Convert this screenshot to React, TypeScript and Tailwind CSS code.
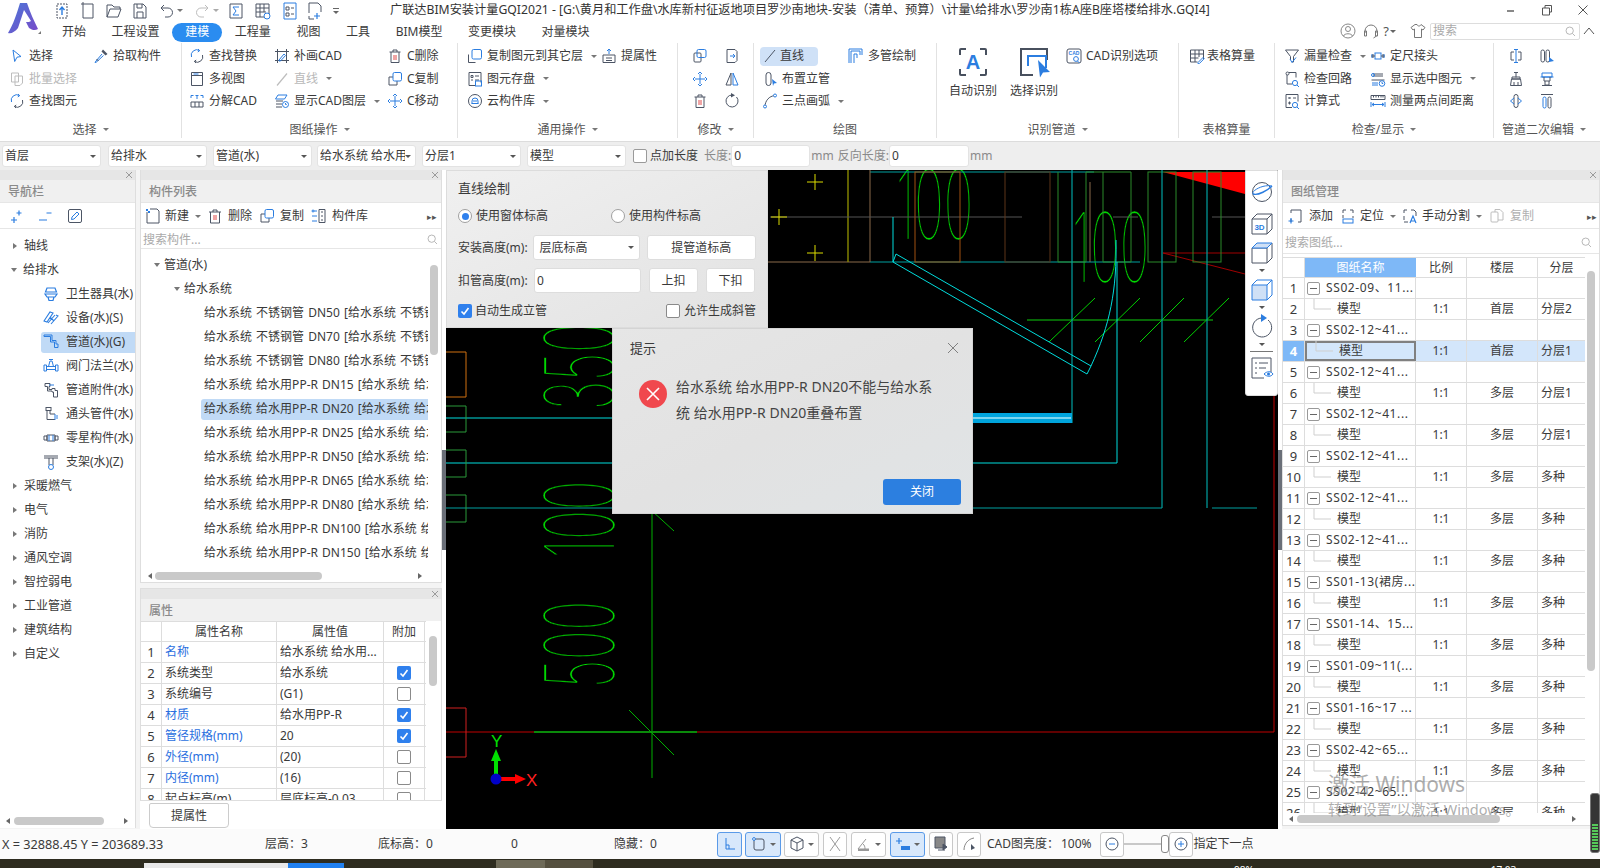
import React from "react";

const g = "#4c5565";
const b = "#2b7de0";
const dim = "#bdbdbd";
const P = (d: string, c: string = g, w: number = 1) => <path d={d} stroke={c} strokeWidth={w} fill="none" />;

const ICONS: Record<string, React.ReactNode> = {
  cursor: P("M4 2l8 6.5-4 .7-2.3 4.3z", b),
  pick: <><path d="M10 1.5l4.5 4.5-2 1.5-4-4z" fill={g} />{P("M9 6l-6 7-1 1.5 1.5-.5 7-6.5", b)}{P("M3.5 11l2 2", g)}</>,
  batch: <>{P("M2.5 2h7v9h-7z", dim)}{P("M6 5h7.5v7l-2.5 2.5H6z", dim)}</>,
  find: <>{P("M2.5 9a5.5 5.5 0 0 1 8-6.5", b)}{P("M9 1l1.7 1.6L8.8 4", b)}{P("M13.5 7a5.5 5.5 0 0 1-8 6.5")}{P("M7 15l-1.7-1.6L7.2 12")}</>,
  multi: <>{P("M2.5 1.5h11v13h-11z")}{P("M2.5 4.5h11")}{P("M4.5 3h5", b)}</>,
  split: <>{P("M2 9h12v5H2zM6 9v5M10 9v5")}{P("M2 5V2.5h2.5M11.5 2.5H14V5M6.5 2.5h3", b)}{P("M8 3v3", b)}</>,
  fill: <>{P("M1 3.5h14M3.5 1v14M1 12.5h14M12.5 1v14")}{P("M5 12l5-6 1.5 1.5-5 5.5H5z", b)}</>,
  lineDim: P("M3 14.5L13 2.5", dim, 1.2),
  layers: <>{P("M4 2h9l-2.5 4H1.5z", b)}{P("M2 8h7M2 11h6M2 14h6")}<circle cx="11.5" cy="11.5" r="3" stroke={b} fill="none" />{P("M11.5 10v1.5h1.2", b)}</>,
  trash: <>{P("M2.5 4h11M6 4V2h4v2M4 4v10.5h8V4")}{P("M7 7v5M9 7v5", "#e04a4a")}</>,
  copy: <>{P("M2 6h4M2 6v8h8v-4")}<rect x="6" y="1.5" width="8.5" height="8.5" rx="1.5" stroke={b} fill="none" /></>,
  copyF: <>{P("M1.5 6.5v8h7")}<rect x="5" y="1.5" width="9.5" height="9.5" rx="1.5" stroke={b} fill="none" /></>,
  move: <>{P("M8 3v10M3 8h10", b)}{P("M6 3l2-2 2 2M6 13l2 2 2-2M3 6L1 8l2 2M13 6l2 2-2 2", b)}</>,
  raise: <>{P("M8 1v5M6 3l2-2 2 2", b)}{P("M2 7h12v7.5H2zM5 10h6M5 12.5h6")}</>,
  store: <>{P("M2 1.5h12v10M2 1.5v13h6")}{P("M4 4.5h2v2H4zM8 5h4M4 9h2M8 9h4")}<rect x="8.5" y="10" width="6" height="5" stroke={b} fill="none" /></>,
  cloud: <><circle cx="8" cy="8" r="6.5" stroke={g} fill="none" />{P("M4.5 10.5h7M5 10.5V8a3 3 0 0 1 6 0v2.5M6 8h4", b)}</>,
  pcopy: <><rect x="2" y="5" width="7" height="9" rx="1" stroke={g} fill="none" /><rect x="5" y="1.5" width="9" height="8" rx="1.5" stroke={b} fill="none" /></>,
  pmirr: <>{P("M3 1.5h5M3 14.5h5M3 1.5v13")}{P("M8 1.5h3l2 2v9l-2 2H8", g)}{P("M6 8h5M9 6l2 2-2 2", b)}</>,
  tri: <>{P("M7 2v12H2z")}<path d="M9 2v12h5z" stroke={b} fill="none" /></>,
  rot: <>{P("M12.5 4a6 6 0 1 1-4.5-2")}<path d="M7 0l4 2.2L7 4.5z" fill={g} /></>,
  line: P("M3 14L13 2", g),
  riser: <><rect x="4" y="1.5" width="5" height="13" rx="2.5" stroke={g} fill="none" /><path d="M10 8l5 4-3 .5-1 2.5z" fill={b} /></>,
  arc: <>{P("M3 13.5C3 8 7 3 13 2.5")}<circle cx="3" cy="13.5" r="1.5" fill="#fff" stroke={b} /><circle cx="13" cy="2.5" r="1.5" fill="#fff" stroke={b} /></>,
  mpipe: <>{P("M3 15V3h9v4M3 3", b)}{P("M6 15V6h3v4", b)}{P("M1 15V1h13v6", b)}</>,
  table: <>{P("M1.5 2h13v9M1.5 2v12h7M1.5 6h13M1.5 10h8M6 2v12M10 2v7")}{P("M9 14.5l5-5 1.2 1.2-5 5H9z", b)}</>,
  funnel: <>{P("M1.5 2h13L9.5 8.5V14H8")}{P("M1.5 2l5 6.5V12")}{P("M6 11l2 3.5 4-5", b)}</>,
  conn: <><rect x="5" y="5" width="6" height="6" stroke={b} fill="none" />{P("M1 8h4M11 8h4", g)}{P("M2 6v4M14 6v4", b)}{P("M3 6v4M13 6v4", g)}</>,
  loop: <>{P("M3 3v10h5M5 1.5h7v5")}<circle cx="3.5" cy="2.5" r="1.5" fill="#fff" stroke={g} /><circle cx="11" cy="12" r="2.6" stroke={b} fill="none" />{P("M13 14l2 2", b)}</>,
  show: <>{P("M3 3h10M3 5h10M1.5 9h13")}<circle cx="3" cy="4" r="1.5" fill="none" stroke={b} />{P("M2 12h6M2 14h6", b)}<circle cx="12" cy="12.5" r="2.8" stroke={b} fill="none" />{P("M12 11v1.5h1.2", b)}</>,
  calc: <>{P("M2 1.5h12v7M2 1.5v13h6")}{P("M4.5 4l2 2M6.5 4l-2 2M9 5h3M4 10h3M5.5 8.5v3")}<circle cx="11" cy="12" r="2.6" stroke={b} fill="none" />{P("M13 14l2 2", b)}</>,
  measure: <>{P("M1 2.5h14v4H1zM3.5 2.5v2M6 2.5v2M8.5 2.5v2M11 2.5v2M13 2.5v2")}{P("M1 9v5M15 9v5M2 11.5h12M4 10l-2 1.5L4 13M12 10l2 1.5-2 1.5", b)}</>,
  e1: <>{P("M8 1.5v13M6 1.5h4M6 14.5h4", b)}{P("M6 4H3v8h3M10 4h3v8h-3")}</>,
  e2: <><rect x="2" y="2" width="3.5" height="12" rx="1.7" stroke={g} fill="none" /><rect x="7" y="2" width="3.5" height="12" rx="1.7" stroke={g} fill="none" /><path d="M10 9l5 4-5 1z" fill={b} /></>,
  e3: <>{P("M6 1.5h4M8 1.5v5M4 6h8v2H4zM3.5 8h9l1 6.5h-11zM6 11v3.5M10 11v3.5")}</>,
  e4: <>{P("M3 2h10v4H3zM1.5 6h13", b)}{P("M5 6v4h6V6M6 10v4h4v-4M3 14.5h10")}</>,
  e5: <><rect x="6" y="1.5" width="4" height="13" rx="2" stroke={g} fill="none" />{P("M6 5L2.5 8 6 11M10 5l3.5 3L10 11", b)}</>,
  e6: <>{P("M2 1.5h12")}<rect x="4" y="4" width="3" height="11" rx="1.5" stroke={b} fill="none" /><rect x="9" y="4" width="3" height="11" rx="1.5" stroke={g} fill="none" /></>,
  sani: <>{P("M4 2h8l1.5 4H2.5z", b, 1.2)}{P("M2 8h12l-2 3H4zM5 11l1 3.5h4l1-3.5", b, 1.2)}</>,
  dev: <>{P("M1 11l6-9 3 1-6 9zM5 13l7-8M8 14l7-8-2-1M7 7l4 4", b, 1.1)}</>,
  pipe: <>{P("M1 2.5h6.5V8h4v5.5H15V10h-2V6.5H9V1H1z", b, 1)}</>,
  valve: <>{P("M1 7h2.5v6H1zM12.5 7H15v6h-2.5zM3.5 8.5h9M3.5 11.5h9M5.5 8.5L7 3h2l1.5 5.5M6 1.5h4", b, 1)}</>,
  attach: <>{P("M2 1.5h5v3H6v3h3v-1h3v2h2.5v6.5h-4V10H9V9H4.5V4.5H2z")}{P("M6 3h5", b)}</>,
  tee: <><rect x="3" y="1.5" width="5" height="3" stroke={g} fill="none" />{P("M4 4.5v9h5M7 4.5V8h5M4 13.5h8")}{P("M12 8v6M14 9v4", b)}</>,
  spare: <>{P("M1 6h3v4H1zM12 6h3v4h-3zM4 5h8v6H4z")}{P("M6 5v6M10 5v6", b)}</>,
  bracket: <>{P("M1 2h14M1 4h14M6 4v7M10 4v7")}<circle cx="8" cy="13" r="2.5" stroke={b} fill="none" /></>,
  add: <>{P("M3 5V2h3M10 2h3v3M3 11v3M13 11v3h-3", g)}{P("M6 2h4M13 5v6", g)}{P("M3 10v5.5M0.5 13h5", b, 1.2)}</>,
  locate: <>{P("M3 5V2h3M10 2h3v3M13 8v2")}{P("M3 7v3")}<rect x="3" y="11" width="10" height="4" stroke={b} fill="none" /></>,
  split2: <>{P("M2 5V2h3M9 2h3l2 2v4M2 8v4M2 14h4")}{P("M8 15l3-7 3 7M9 13h4", b, 1.2)}</>,
  copyD: <><rect x="2" y="4" width="7" height="10" rx="1" stroke={dim} fill="none" />{P("M6 1.5h5l3 3V12H9M6 1.5V4", dim)}</>,
  newf: <>{P("M2 4v11h12V3l-2-2H5")}<path d="M1 1h2v2H1zM3 3h2v2H3z" fill={b} /></>,
  del: <>{P("M2 4h12M6 4V2h4v2M3.5 4v11h9V4")}{P("M7 7v5M9 7v5", "#e04a4a")}</>,
  lib: <>{P("M8 1.5h6v13H8zM10 4h2M10 8h2M10 12h2")}{P("M1 3h5M1 8h5M1 13h5", b)}<circle cx="2" cy="3" r="1" fill="#fff" stroke={b} /></>,
  plus2: P("M4 12h6M7 9v6M9.5 5h5M12 2.5v5", b, 1.2),
  minus2: P("M2 12h8M9.5 5h5", b, 1.2),
  edit: <><rect x="1.5" y="1.5" width="13" height="13" rx="1.5" stroke={g} fill="none" />{P("M4.5 11.5l.5-2.5 5-5 2 2-5 5z", b)}</>,
  search: <><circle cx="7" cy="7" r="4.5" stroke="#a8a8a8" fill="none" />{P("M10.5 10.5l3 3", "#a8a8a8")}</>,
};

const Ic = ({ n, s = 16 }: { n: string; s?: number }) => (
  <svg width={s} height={s} viewBox="0 0 16 16" className="shrink-0">{ICONS[n]}</svg>
);

const Caret = ({ c = "#777" }: { c?: string }) => (
  <span className="inline-block w-0 h-0 border-x-[3px] border-x-transparent border-t-[3.5px] shrink-0" style={{ borderTopColor: c }} />
);

function Item({ i, t, caret, off, on }: { i?: string; t?: string; caret?: boolean; off?: boolean; on?: boolean }) {
  return (
    <div className={`flex items-center h-[22.5px] gap-[4px] whitespace-nowrap ${off ? "text-[#b8b8b8]" : ""}`}>
      {on ? (
        <div className="flex items-center gap-[2px] h-[19px] w-[58px] -ml-[2px] pl-[2px] bg-[#cfe1f7] rounded-[4px]">
          <Ic n={i!} />
          <span>{t}</span>
        </div>
      ) : (
        <>
          {i && <Ic n={i} />}
          {t && <span>{t}</span>}
          {caret && <span className="ml-[4px] flex"><Caret /></span>}
        </>
      )}
    </div>
  );
}

const Col = ({ w, children }: { w: string; children: React.ReactNode }) => <div className={`flex flex-col shrink-0 ${w}`}>{children}</div>;

function Group({ w, pl, label, caret, children }: { w: string; pl: string; label: string; caret?: boolean; children: React.ReactNode }) {
  return (
    <div className={`${w} shrink-0 flex flex-col h-[95px] mt-[1px] border-r border-[#e2e2e2]`}>
      <div className={`${pl} h-[75px] pt-[2px] flex`}>{children}</div>
      <div className="flex-1 flex items-center justify-center gap-[6px] text-[#555] pt-[3px]">
        <span>{label}</span>
        {caret && <Caret />}
      </div>
    </div>
  );
}

const Drop = ({ t, w }: { t: string; w: string }) => (
  <div className={`${w} shrink-0 h-[22px] bg-white rounded-[3px] border border-[#e3e3e3] flex items-center justify-between pl-[2px] pr-[4px] whitespace-nowrap`}>
    <span className="overflow-hidden leading-[18px]">{t}</span>
    <Caret c="#555" />
  </div>
);

const Check = ({ on }: { on?: boolean }) => (
  <span className={`w-[14px] h-[14px] rounded-[2px] flex items-center justify-center shrink-0 ${on ? "bg-[#2f80ed]" : "bg-white border border-[#8a8a8a]"}`}>
    {on && (
      <svg width="10" height="10" viewBox="0 0 10 10"><path d="M1.5 5.5L4 8l4.500-6" stroke="#fff" strokeWidth="1.6" fill="none" /></svg>
    )}
  </span>
);

function PanelHead({ t }: { t: string }) {
  return (
    <>
      <div className="h-[10px] bg-[#e6e6e6] flex items-center justify-end pr-[2px] shrink-0">
        <svg width="8" height="8" viewBox="0 0 8 8"><path d="M1 1l6 6M7 1L1 7" stroke="#9a9a9a" /></svg>
      </div>
      <div className="h-[22px] bg-[#f0f0f0] text-[#8a8a8a] flex items-center pl-[8px] pt-[2px] shrink-0 font-medium">{t}</div>
    </>
  );
}

const Tri = ({ open }: { open?: boolean }) =>
  open ? (
    <span className="w-0 h-0 border-x-[3.5px] border-x-transparent border-t-[4px] border-t-[#777] shrink-0" />
  ) : (
    <span className="w-0 h-0 border-y-[3.5px] border-y-transparent border-l-[4px] border-l-[#777] shrink-0" />
  );

const navTop = ["轴线"];
const navSub: [string, string][] = [
  ["sani", "卫生器具(水)"],
  ["dev", "设备(水)(S)"],
  ["pipe", "管道(水)(G)"],
  ["valve", "阀门法兰(水)"],
  ["attach", "管道附件(水)"],
  ["tee", "通头管件(水)"],
  ["spare", "零星构件(水)"],
  ["bracket", "支架(水)(Z)"],
];
const navBottom = ["采暖燃气", "电气", "消防", "通风空调", "智控弱电", "工业管道", "建筑结构", "自定义"];

const compRows = [
  "给水系统 不锈钢管 DN50 [给水系统 不锈钢管 DN50]",
  "给水系统 不锈钢管 DN70 [给水系统 不锈钢管 DN70]",
  "给水系统 不锈钢管 DN80 [给水系统 不锈钢管 DN80]",
  "给水系统 给水用PP-R DN15 [给水系统 给水用PP-R]",
  "给水系统 给水用PP-R DN20 [给水系统 给水用PP-R]",
  "给水系统 给水用PP-R DN25 [给水系统 给水用PP-R]",
  "给水系统 给水用PP-R DN50 [给水系统 给水用PP-R]",
  "给水系统 给水用PP-R DN65 [给水系统 给水用PP-R]",
  "给水系统 给水用PP-R DN80 [给水系统 给水用PP-R]",
  "给水系统 给水用PP-R DN100 [给水系统 给水用PP-R]",
  "给水系统 给水用PP-R DN150 [给水系统 给水用PP-R]",
];

const attrs: [string, string, boolean, boolean | null][] = [
  ["名称", "给水系统 给水用...", true, null],
  ["系统类型", "给水系统", false, true],
  ["系统编号", "(G1)", false, false],
  ["材质", "给水用PP-R", true, true],
  ["管径规格(mm)", "20", true, true],
  ["外径(mm)", "(20)", true, false],
  ["内径(mm)", "(16)", true, false],
  ["起点标高(m)", "层底标高-0.03", false, false],
];

const sheetNames = [
  "SS02-09、11...", "SS02-12~41...", "SS02-12~41...", "SS02-12~41...", "SS02-12~41...", "SS02-12~41...", "SS02-12~41...",
  "SS01-13(裙房...", "SS01-14、15...", "SS01-09~11(...", "SS01-16~17 ...", "SS02-42~65...", "SS02-42~65...",
];
const sheetRows = Array.from({ length: 26 }, (_, k) => {
  const n = k + 1;
  if (n % 2 === 1) return { n, name: sheetNames[(n - 1) / 2], parent: true, floor: "", layer: "" };
  const floor = n <= 4 ? "首层" : "多层";
  const layer = n === 2 ? "分层2" : n <= 8 ? "分层1" : "多种";
  return { n, name: "模型", parent: false, floor, layer };
});

const HScroll = ({ l, w, ax, bx }: { l: string; w: string; ax: string; bx: string }) => (
  <div className="h-[12px] flex items-center shrink-0 bg-white">
    <span className={ax}><span className="block w-0 h-0 border-y-[3.5px] border-y-transparent border-r-[4px] border-r-[#666]" /></span>
    <span className={`${l} ${w} h-[8px] rounded-full bg-[#c9c9c9] shrink-0`} />
    <span className={bx}><span className="block w-0 h-0 border-y-[3.5px] border-y-transparent border-l-[4px] border-l-[#666]" /></span>
  </div>
);

const TopIcon = ({ children, ml }: { children: React.ReactNode; ml: string }) => (
  <svg width="18" height="18" viewBox="0 0 18 18" className={`${ml} shrink-0`}>{children}</svg>
);

function Cad() {
  const C = "#00dcdc";
  const D = "#00a0a0";
  const G = "#00d000";
  const dg = "#0a8a0a";
  const digit = { fill: "#00d800", stroke: "#000", strokeWidth: 0.5, fontFamily: "Inter, sans-serif", fontWeight: 100, fontSize: 96 } as const;
  return (
    <svg width="832" height="659" viewBox="446 170 832 659" className="block" fill="none">
      <path d="M1163 172H1245V194Z" fill="#ff0000" />
      <path d="M1163 253H1245M1163 253L1245 274" stroke="#a00000" />
      <path d="M1274 396V732H446" stroke="#c00000" />
      <path d="M446 708H466V757H446" stroke="#d02020" />
      <text transform="translate(896 239) scale(.52 1)" {...digit}>100</text>
      <text transform="translate(1072 282) scale(.52 1)" {...digit}>100</text>
      <text transform="translate(614 558) rotate(-90) scale(.52 1)" {...digit}>100</text>
      <text transform="translate(614 410) rotate(-90) scale(.52 1)" {...digit}>350</text>
      <text transform="translate(614 688) rotate(-90) scale(.52 1)" {...digit}>500</text>
      <path d="M870 172H1094" stroke={D} />
      <path d="M767 262H870" stroke="#8a6a4a" />
      <path d="M870 262H1140" stroke={D} />
      <path d="M848 170V262" stroke="#8a8a00" strokeWidth="1.4" />
      <path d="M870 170V262" stroke="#8a6a4a" />
      <path d="M770 217H1022M1113 217H1138M1212 217H1245" stroke="#555" />
      <path d="M807 182H823M815 174V190M771 217H787M779 209V225M807 253H823M815 245V261" stroke="#dcdc00" />
      <rect x="915" y="172" width="45" height="90" stroke="#a05010" />
      <rect x="1005" y="172" width="45" height="90" stroke="#5c3418" />
      <path d="M1058 172V262M1086 172V262H1058" stroke="#2a8a2a" />
      <path d="M1103 172V262H1131V172H1086" stroke="#2a8a2a" />
      <rect x="1148" y="172" width="28" height="90" stroke="#2a8a2a" />
      <rect x="1193" y="172" width="28" height="90" stroke="#2a8a2a" />
      <path d="M1090 182V262" stroke="#8a6a4a" />
      <path d="M1027 320H1213" stroke={dg} strokeWidth="1.4" />
      <path d="M1049 342L1095 298M1095 342L1140 298M1140 342L1184 298M1184 342L1229 298" stroke={G} />
      <path d="M1072 170V423M1162 170V508M1207 170V508" stroke={D} strokeWidth="1.2" />
      <path d="M1117 262V463H446" stroke={C} />
      <path d="M446 418H1072" stroke={C} />
      <path d="M446 508H1162M1212 508H1257" stroke={D} />
      <path d="M972 413H1072V423H972" fill="#00a4dc" />
      <path d="M972 418H1071" stroke="#a6e4f4" strokeWidth="1.4" />
      <path d="M893 217V262L896 254L1091 366L1087 374L893 262" stroke={C} />
      <path d="M1091 366C1110 325 1117 290 1116 240" stroke={C} />
      <path d="M446 352H466V397H446" stroke="#d07010" />
      <path d="M446 406H466V432H446M446 450H466V477H446M446 495H466V522H446" stroke="#2a9a3a" />
      <path d="M652 514V778" stroke="#00b000" />
      <path d="M534 732H697" stroke={dg} strokeWidth="2" />
      <path d="M629 710L674 755M640 500L674 531" stroke="#00b000" />
      <path d="M496 775V758" stroke="#00e000" strokeWidth="4" />
      <path d="M496 749L491 761H501Z" fill="#00e000" />
      <path d="M498 779H516" stroke="#ff0000" strokeWidth="4" />
      <path d="M526 779L515 774V784Z" fill="#ff0000" />
      <circle cx="496" cy="779" r="5.5" fill="#0000c8" />
      <text x="491" y="747" fill="#00e000" fontSize="17" fontFamily="Liberation Sans, sans-serif">Y</text>
      <text x="526" y="786" fill="#ff2020" fontSize="17" fontFamily="Liberation Sans, sans-serif">X</text>
    </svg>
  );
}

const ViewBtn = ({ children }: { children: React.ReactNode }) => (
  <svg width="24" height="24" viewBox="0 0 24 24" className="shrink-0">{children}</svg>
);

const StatBtn = ({ w, on, caret, children }: { w: string; on?: boolean; caret?: boolean; children: React.ReactNode }) => (
  <div className={`${w} h-[25px] shrink-0 rounded-[3px] border flex items-center justify-center gap-[3px] ${on ? "bg-[#d8e8fb] border-[#5a9ae8]" : "bg-white border-[#c8c8c8]"}`}>
    <svg width="16" height="16" viewBox="0 0 16 16">{children}</svg>
    {caret && <Caret c="#666" />}
  </div>
);

export default function App() {
  return (
    <div className="relative w-[1600px] h-[868px] overflow-hidden flex flex-col bg-white text-[12px] leading-none text-[#3a3a3a] font-['Noto_Sans','Noto_Sans_CJK_SC',sans-serif]">
      {/* title + tabs */}
      <div className="h-[42px] flex shrink-0">
        <div className="w-[52px] shrink-0 pl-[8px] pt-[3px]">
          <svg width="34" height="31" viewBox="0 0 34 31">
            <defs>
              <linearGradient id="lg" x1="0" y1="0" x2="1" y2="1">
                <stop offset="0" stopColor="#4a78d8" />
                <stop offset="1" stopColor="#7a4ac8" />
              </linearGradient>
            </defs>
            <path d="M12 0L19 0C22 9 26 18 30 26C27 28 24 27 21 25L18 19C20 19 22 19 23 18L16 7L10 25C7 29 3 31 0 30C5 22 9 10 12 0Z" fill="url(#lg)" />
            <path d="M33 28l-3 3h3z" fill="#777" />
          </svg>
        </div>
        <div className="flex-1 flex flex-col">
          <div className="h-[21px] flex items-center relative">
            <TopIcon ml="ml-[1px]"><path d="M4 2h10v14H4z" stroke={g} strokeDasharray="2 1" fill="none" /><path d="M9 13V6M6.5 8L9 5l2.5 3" stroke={b} strokeWidth="1.4" fill="none" /></TopIcon>
            <TopIcon ml="ml-[8px]"><path d="M4 4v12h10V2H6M3 1h2v2H3z" stroke={g} fill="none" /></TopIcon>
            <TopIcon ml="ml-[8px]"><path d="M2 15V3h5l2 2h6v2M2 15h11l3-8H5z" stroke={g} fill="none" /></TopIcon>
            <TopIcon ml="ml-[8px]"><path d="M3 2h9l3 3v11H3zM6 2v4h5V2M6 16v-6h6v6" stroke={g} fill="none" /></TopIcon>
            <TopIcon ml="ml-[8px]"><path d="M4 6h7a4 4 0 0 1 0 9H8M7 3L4 6l3 3" stroke={g} fill="none" /></TopIcon>
            <span className="ml-[2px] flex"><Caret /></span>
            <TopIcon ml="ml-[11px]"><path d="M14 6H7a4 4 0 0 0 0 9h3M11 3l3 3-3 3" stroke={dim} fill="none" /></TopIcon>
            <span className="ml-[1px] flex"><Caret c="#aaa" /></span>
            <TopIcon ml="ml-[8px]"><path d="M3 2h12v14H3z" stroke={g} fill="none" /><path d="M12 5H6l3 4-3 4h6" stroke={b} fill="none" /></TopIcon>
            <TopIcon ml="ml-[9px]"><path d="M2 2h13v10M2 2v13h8M2 6h13M2 10h10M6 2v13M10 2v8" stroke={g} fill="none" /><circle cx="13" cy="14" r="3" stroke={b} fill="none" /></TopIcon>
            <TopIcon ml="ml-[9px]"><path d="M3 1h12v16H3z" stroke={b} fill="none" /><path d="M5 5h3v3H5zM10 6h3M5 11h3v3H5zM10 12h3" stroke={g} fill="none" /></TopIcon>
            <TopIcon ml="ml-[7px]"><path d="M3 1h9l3 3v6M3 1v10M3 14v3h5" stroke={g} fill="none" /><path d="M11 11v6M8 14h6" stroke={b} strokeWidth="1.2" fill="none" /></TopIcon>
            <span className="ml-[9px] flex flex-col items-center gap-[2px]"><span className="w-[6px] h-[1px] bg-[#666]" /><Caret c="#666" /></span>
            <span className="ml-[51px] text-[12.2px] whitespace-nowrap text-[#333]">广联达BIM安装计量GQI2021 - [G:\黄月和工作盘\水库新村征返地项目罗沙南地块-安装（清单、预算）\计量\给排水\罗沙南1栋A座B座塔楼给排水.GQI4]</span>
            <div className="absolute right-[11px] top-[3px] flex items-center gap-[24px]">
              <svg width="12" height="14" viewBox="0 0 12 14"><path d="M2 8h7" stroke="#555" strokeWidth="1.4" /></svg>
              <svg width="12" height="14" viewBox="0 0 12 14"><path d="M1.5 5h7v7h-7zM4 5V2.5h6.5V9H8.5" stroke="#555" fill="none" /></svg>
              <svg width="12" height="14" viewBox="0 0 12 14"><path d="M1.5 2.5l9 9M10.5 2.5l-9 9" stroke="#555" /></svg>
            </div>
          </div>
          <div className="h-[21px] flex items-center relative">
            <div className="flex items-center ml-[10px] gap-[25.6px] pt-[1px]">
              {["开始", "工程设置"].map((t) => <span key={t}>{t}</span>)}
              <span className="bg-[#2a8cf0] text-white rounded-full h-[19px] w-[50px] -mx-[13px] flex items-center justify-center">建模</span>
              {["工程量", "视图", "工具", "BIM模型", "变更模块", "对量模块"].map((t) => <span key={t}>{t}</span>)}
            </div>
            <div className="absolute right-[5px] top-0 h-[20px] flex items-center">
              <svg width="16" height="16" viewBox="0 0 16 16" className="mr-[7px]"><circle cx="8" cy="8" r="7" stroke="#888" fill="none" /><circle cx="8" cy="6" r="2.5" stroke="#888" fill="none" /><path d="M3.5 13c1-3 8-3 9 0" stroke="#888" fill="none" /></svg>
              <svg width="16" height="16" viewBox="0 0 16 16" className="mr-[4px]"><path d="M2 10V8a6 6 0 0 1 12 0v2M1.5 8h2v5h-2zM12.5 8h2v5h-2zM13.5 13l-3 2" stroke="#777" fill="none" /></svg>
              <span className="text-[#555] text-[13px] mr-[1px]">?</span>
              <span className="flex mr-[14px]"><Caret c="#666" /></span>
              <svg width="16" height="16" viewBox="0 0 16 16" className="mr-[4px]"><path d="M5 1.5L1 4.5l2 2.5 1.5-1V14.5h7V6l1.5 1 2-2.5-4-3c-.5 2-3.5 2-4 0z" stroke="#777" fill="none" /></svg>
              <div className="w-[150px] h-[17px] border border-[#dddddd] rounded-[2px] flex items-center justify-between px-[2px] text-[#aaa]">
                <span>搜索</span>
                <Ic n="search" s={13} />
              </div>
              <svg width="12" height="10" viewBox="0 0 12 10" className="ml-[3px]"><path d="M1 8l5-6 5 6" stroke="#555" fill="none" /></svg>
            </div>
          </div>
        </div>
      </div>

      {/* ribbon */}
      <div className="h-[100px] flex shrink-0 bg-white border-b border-[#dcdcdc]">
        <Group w="w-[182px]" pl="pl-[9px]" label="选择" caret>
          <Col w="w-[84px]">
            <Item i="cursor" t="选择" />
            <Item i="batch" t="批量选择" off />
            <Item i="find" t="查找图元" />
          </Col>
          <Col w="w-[84px]"><Item i="pick" t="拾取构件" /></Col>
        </Group>
        <Group w="w-[276px]" pl="pl-[7px]" label="图纸操作" caret>
          <Col w="w-[85px]">
            <Item i="find" t="查找替换" />
            <Item i="multi" t="多视图" />
            <Item i="split" t="分解CAD" />
          </Col>
          <Col w="w-[113px]">
            <Item i="fill" t="补画CAD" />
            <Item i="lineDim" t="直线" caret off />
            <Item i="layers" t="显示CAD图层" caret />
          </Col>
          <Col w="w-[60px]">
            <Item i="trash" t="C删除" />
            <Item i="copy" t="C复制" />
            <Item i="move" t="C移动" />
          </Col>
        </Group>
        <Group w="w-[220px]" pl="pl-[9px]" label="通用操作" caret>
          <Col w="w-[134px]">
            <Item i="copyF" t="复制图元到其它层" caret />
            <Item i="store" t="图元存盘" caret />
            <Item i="cloud" t="云构件库" caret />
          </Col>
          <Col w="w-[60px]"><Item i="raise" t="提属性" /></Col>
        </Group>
        <Group w="w-[76px]" pl="pl-[14px]" label="修改" caret>
          <Col w="w-[32px]">
            <Item i="pcopy" />
            <Item i="move" />
            <Item i="trash" />
          </Col>
          <Col w="w-[24px]">
            <Item i="pmirr" />
            <Item i="tri" />
            <Item i="rot" />
          </Col>
        </Group>
        <Group w="w-[183px]" pl="pl-[8px]" label="绘图">
          <Col w="w-[86px]">
            <Item i="line" t="直线" on />
            <Item i="riser" t="布置立管" />
            <Item i="arc" t="三点画弧" caret />
          </Col>
          <Col w="w-[80px]"><Item i="mpipe" t="多管绘制" /></Col>
        </Group>
        <Group w="w-[242px]" pl="pl-[12px]" label="识别管道" caret>
          <div className="w-[48px] shrink-0 flex flex-col items-center gap-[5px]">
            <svg width="32" height="32" viewBox="0 0 32 32" className="mt-[1px]"><path d="M3 9V4a1 1 0 0 1 1-1h5M23 3h5a1 1 0 0 1 1 1v5M29 23v5a1 1 0 0 1-1 1h-5M9 29H4a1 1 0 0 1-1-1v-5" stroke="#48505e" strokeWidth="2" fill="none" /><text x="16" y="23" fontSize="20" fontWeight="700" fill={b} textAnchor="middle" fontFamily="Liberation Sans, sans-serif">A</text></svg>
            <span className="whitespace-nowrap leading-[15px]">自动识别</span>
          </div>
          <div className="w-[48px] ml-[13px] shrink-0 flex flex-col items-center gap-[5px]">
            <svg width="32" height="32" viewBox="0 0 32 32" className="mt-[1px]"><path d="M3 30V3h26v11" stroke="#48505e" strokeWidth="2" fill="none" /><path d="M3 29h12" stroke="#48505e" strokeWidth="2" /><path d="M10 20V10h18v12" stroke={b} strokeWidth="2" fill="none" /><path d="M20 14l12 12-7 .5-3 5z" fill={b} /></svg>
            <span className="whitespace-nowrap leading-[15px]">选择识别</span>
          </div>
          <div className="ml-[8px] shrink-0 flex items-start">
            <div className="flex items-center h-[22.5px] gap-[4px] whitespace-nowrap">
              <svg width="16" height="16" viewBox="0 0 16 16"><rect x="1" y="1" width="14" height="14" rx="2" stroke={g} fill="none" /><text x="8" y="7" fontSize="5" fontWeight="700" fill={b} textAnchor="middle" fontFamily="Liberation Sans, sans-serif">CAD</text><circle cx="10" cy="11" r="2.4" stroke={b} fill="none" /><path d="M11.5 13l2 2" stroke={b} /></svg>
              <span>CAD识别选项</span>
            </div>
          </div>
        </Group>
        <Group w="w-[96px]" pl="pl-[10px]" label="表格算量">
          <div className="flex items-center h-[22.5px] gap-[2px] whitespace-nowrap"><Ic n="table" /><span>表格算量</span></div>
        </Group>
        <Group w="w-[219px]" pl="pl-[9px]" label="检查/显示" caret>
          <Col w="w-[86px]">
            <Item i="funnel" t="漏量检查" caret />
            <Item i="loop" t="检查回路" />
            <Item i="calc" t="计算式" />
          </Col>
          <Col w="w-[120px]">
            <Item i="conn" t="定尺接头" />
            <Item i="show" t="显示选中图元" caret />
            <Item i="measure" t="测量两点间距离" />
          </Col>
        </Group>
        <div className="flex-1 flex flex-col h-[95px] mt-[1px]">
          <div className="h-[75px] pt-[2px] pl-[14px] flex">
            <Col w="w-[31px]">
              <Item i="e1" />
              <Item i="e3" />
              <Item i="e5" />
            </Col>
            <Col w="w-[24px]">
              <Item i="e2" />
              <Item i="e4" />
              <Item i="e6" />
            </Col>
          </div>
          <div className="flex-1 flex items-center justify-center gap-[6px] text-[#555] pr-[6px] pt-[3px]"><span>管道二次编辑</span><Caret /></div>
        </div>
      </div>

      {/* property bar */}
      <div className="h-[28px] flex items-center bg-[#eeeeee] shrink-0 pl-[2px] whitespace-nowrap">
        <Drop t="首层" w="w-[99px]" />
        <div className="ml-[7px]"><Drop t="给排水" w="w-[99px]" /></div>
        <div className="ml-[6px]"><Drop t="管道(水)" w="w-[99px]" /></div>
        <div className="ml-[5px]"><Drop t="给水系统 给水用PP-R" w="w-[99px]" /></div>
        <div className="ml-[6px]"><Drop t="分层1" w="w-[99px]" /></div>
        <div className="ml-[6px]"><Drop t="模型" w="w-[99px]" /></div>
        <span className="ml-[7px] w-[14px] h-[14px] bg-white border border-[#9a9a9a] rounded-[2px] shrink-0" />
        <span className="ml-[3px]">点加长度</span>
        <span className="ml-[6px] text-[#8a8a8a]">长度:</span>
        <div className="w-[79px] h-[22px] bg-white rounded-[3px] border border-[#e3e3e3] flex items-center pl-[2px]">0</div>
        <span className="ml-[1px] text-[#8a8a8a]">mm</span>
        <span className="ml-[4px] text-[#8a8a8a]">反向长度:</span>
        <div className="w-[80px] h-[22px] bg-white rounded-[3px] border border-[#e3e3e3] flex items-center pl-[2px]">0</div>
        <span className="ml-[1px] text-[#8a8a8a]">mm</span>
      </div>

      {/* main */}
      <div className="flex h-[659px] shrink-0 bg-[#f4f4f4]">
        {/* nav */}
        <div className="w-[136px] shrink-0 flex flex-col bg-white border-r border-[#dedede] h-[658px]">
          <PanelHead t="导航栏" />
          <div className="h-[27px] shrink-0 flex items-center pl-[7px] pt-[1px] gap-[14px] border-y border-[#e6e6e6]">
            <Ic n="plus2" />
            <Ic n="minus2" />
            <Ic n="edit" />
          </div>
          <div className="flex-1 pt-[5px]">
            {navTop.map((t) => (
              <div key={t} className="h-[24px] flex items-center pl-[13px] gap-[7px]"><Tri /><span>{t}</span></div>
            ))}
            <div className="h-[24px] flex items-center pl-[11px] gap-[6px]"><Tri open /><span>给排水</span></div>
            {navSub.map(([i, t], k) => (
              <div key={t} className="h-[24px] flex items-center">
                <div className={`w-full h-[21px] flex items-center ml-[41px] pl-[2px] gap-[7px] whitespace-nowrap ${k === 2 ? "bg-[#c0daf6] rounded-l-[3px]" : ""}`}>
                  <Ic n={i} />
                  <span>{t}</span>
                </div>
              </div>
            ))}
            {navBottom.map((t) => (
              <div key={t} className="h-[24px] flex items-center pl-[13px] gap-[7px]"><Tri /><span>{t}</span></div>
            ))}
          </div>
          <HScroll l="ml-[4px]" w="w-[90px]" ax="ml-[6px]" bx="ml-[20px]" />
          <div className="h-[1px]" />
        </div>
        <div className="w-[4px] shrink-0" />

        {/* middle */}
        <div className="w-[302px] shrink-0 flex flex-col">
          <div className="h-[413px] shrink-0 flex flex-col bg-white border-x border-b border-[#dedede]">
            <PanelHead t="构件列表" />
            <div className="h-[27px] shrink-0 flex items-center pl-[4px] pt-[1px] border-y border-[#e6e6e6] whitespace-nowrap">
              <Ic n="newf" />
              <span className="ml-[4px]">新建</span>
              <span className="ml-[6px] flex"><Caret /></span>
              <span className="ml-[6px]"><Ic n="del" /></span>
              <span className="ml-[5px]">删除</span>
              <span className="ml-[7px]"><Ic n="copy" /></span>
              <span className="ml-[5px]">复制</span>
              <span className="ml-[7px]"><Ic n="lib" /></span>
              <span className="ml-[5px]">构件库</span>
              <span className="ml-[59px] text-[#555] text-[9px]">▸▸</span>
            </div>
            <div className="h-[20px] shrink-0 flex items-center justify-between px-[2px] pt-[2px] text-[#aaa] border-b border-[#e6e6e6]">
              <span>搜索构件...</span>
              <Ic n="search" s={13} />
            </div>
            <div className="flex-1 flex min-h-0">
              <div className="w-[287px] shrink-0 overflow-hidden pt-[4px] whitespace-nowrap">
                <div className="h-[24px] flex items-center pl-[13px] gap-[4px]"><Tri open /><span>管道(水)</span></div>
                <div className="h-[24px] flex items-center pl-[33px] gap-[4px]"><Tri open /><span>给水系统</span></div>
                {compRows.map((t, k) => (
                  <div key={k} className="h-[24px] flex items-center">
                    <div className={`w-full h-[21px] flex items-center ml-[60px] pl-[3px] overflow-hidden [word-spacing:1px] ${k === 4 ? "bg-[#c0daf6] rounded-l-[3px]" : ""}`}>{t}</div>
                  </div>
                ))}
              </div>
              <div className="flex-1 pl-[2px] pt-[16px]"><div className="w-[8px] h-[90px] rounded-full bg-[#c9c9c9]" /></div>
            </div>
            <HScroll l="ml-[3px]" w="w-[167px]" ax="ml-[7px]" bx="ml-[96px]" />
          </div>
          <div className="h-[5px] shrink-0" />
          <div className="h-[213px] shrink-0 flex flex-col bg-white border border-[#dedede]">
            <PanelHead t="属性" />
            <div className="flex-1 flex min-h-0">
              <div className="w-[285px] shrink-0 overflow-hidden">
                <div className="h-[21px] flex border-y border-[#dddddd] text-center">
                  <span className="w-[21px] border-r border-[#dddddd]" />
                  <span className="w-[115px] border-r border-[#dddddd] flex items-center justify-center">属性名称</span>
                  <span className="w-[107px] border-r border-[#dddddd] flex items-center justify-center">属性值</span>
                  <span className="w-[41px] border-r border-[#dddddd] flex items-center justify-center">附加</span>
                </div>
                {attrs.map(([n, v, blue, ck], k) => (
                  <div key={n} className="h-[21px] flex border-b border-[#dddddd] whitespace-nowrap">
                    <span className="w-[21px] border-r border-[#dddddd] flex items-center justify-center text-[13px]">{k + 1}</span>
                    <span className={`w-[115px] border-r border-[#dddddd] flex items-center pl-[3px] ${blue ? "text-[#2a6fe0]" : ""}`}>{n}</span>
                    <span className="w-[107px] border-r border-[#dddddd] flex items-center pl-[3px]">{v}</span>
                    <span className="w-[41px] border-r border-[#dddddd] flex items-center justify-center">{ck !== null && <Check on={ck} />}</span>
                  </div>
                ))}
              </div>
              <div className="flex-1 pl-[3px] pt-[15px]"><div className="w-[8px] h-[50px] rounded-full bg-[#c9c9c9]" /></div>
            </div>
          </div>
          <div className="flex-1 bg-white pl-[9px] pt-[2px]">
            <div className="w-[80px] h-[25px] rounded-b-[4px] rounded-t-[2px] bg-white border border-[#cccccc] flex items-center justify-center">提属性</div>
          </div>
        </div>

        {/* splitter */}
        <div className="w-[4px] shrink-0 flex flex-col bg-white">
          <div className="h-[280px]" />
          <div className="h-[100px] bg-[#6a6f78]" />
        </div>

        {/* canvas */}
        <div className="relative w-[832px] h-[659px] shrink-0 bg-black overflow-hidden">
          <Cad />

          <div className="absolute left-0 top-0 w-[322px] h-[158px] bg-gradient-to-br from-[#f0f0f0] to-[#e2e2e2] border border-[#dcdcdc] px-[11px] pt-[9px] flex flex-col whitespace-nowrap">
            <div className="text-[13px] h-[16px] flex items-center">直线绘制</div>
            <div className="mt-[10px] h-[20px] flex items-center">
              <span className="w-[14px] h-[14px] rounded-full bg-white border border-[#a0a0a0] flex items-center justify-center shrink-0"><span className="w-[7px] h-[7px] rounded-full bg-[#2f80ed]" /></span>
              <span className="ml-[4px] w-[135px]">使用窗体标高</span>
              <span className="w-[14px] h-[14px] rounded-full bg-white border border-[#a0a0a0] shrink-0" />
              <span className="ml-[4px]">使用构件标高</span>
            </div>
            <div className="mt-[9px] h-[25px] flex items-center">
              <span className="w-[76px]">安装高度(m):</span>
              <div className="w-[107px] h-[25px] bg-white rounded-[3px] border border-[#dddddd] flex items-center justify-between pl-[5px] pr-[5px]"><span>层底标高</span><Caret c="#555" /></div>
              <div className="ml-[7px] w-[110px] h-[25px] bg-white rounded-[3px] border border-[#dddddd] flex items-center justify-center">提管道标高</div>
            </div>
            <div className="mt-[8px] h-[25px] flex items-center">
              <span className="w-[76px]">扣管高度(m):</span>
              <div className="w-[107px] h-[25px] bg-white rounded-[3px] border border-[#dddddd] flex items-center pl-[2px]">0</div>
              <div className="ml-[8px] w-[49px] h-[25px] bg-white rounded-[3px] border border-[#dddddd] flex items-center justify-center">上扣</div>
              <div className="ml-[8px] w-[49px] h-[25px] bg-white rounded-[3px] border border-[#dddddd] flex items-center justify-center">下扣</div>
            </div>
            <div className="mt-[9px] h-[18px] flex items-center">
              <Check on />
              <span className="ml-[3px] w-[192px]">自动生成立管</span>
              <Check />
              <span className="ml-[4px]">允许生成斜管</span>
            </div>
          </div>

          <div className="absolute left-[166px] top-[158px] w-[361px] h-[186px] bg-gradient-to-br from-[#e6e6e6] via-[#e2e2e2] to-[#e0e4e6] border border-[#d4d4d4] flex flex-col">
            <div className="h-[38px] flex items-center justify-between pl-[17px] pr-[13px]">
              <span className="text-[13px]">提示</span>
              <svg width="12" height="12" viewBox="0 0 12 12"><path d="M1 1l10 10M11 1L1 11" stroke="#808080" /></svg>
            </div>
            <div className="flex pl-[26px] pt-[13px] flex-1">
              <svg width="28" height="28" viewBox="0 0 28 28" className="shrink-0"><circle cx="14" cy="14" r="14" fill="#f0484e" /><path d="M8 8l12 12M20 8L8 20" stroke="#fff" strokeWidth="1.6" /></svg>
              <div className="ml-[9px] w-[264px] leading-[26px] text-[14px] -mt-[6px] text-[#444]">给水系统 给水用PP-R DN20不能与给水系统 给水用PP-R DN20重叠布置</div>
            </div>
            <div className="flex justify-end pr-[11px] pb-[8px]">
              <div className="w-[78px] h-[26px] rounded-[3px] bg-[#2c7fe0] text-white flex items-center justify-center">关闭</div>
            </div>
          </div>

          <div className="absolute left-[799px] top-0 w-[33px] h-[226px] bg-white rounded-b-[3px] border border-[#dddddd] flex flex-col items-center pt-[9px]">
            <ViewBtn><ellipse cx="12" cy="12" rx="9.5" ry="9.5" stroke={g} fill="none" /><path d="M3 14C8 16 18 10 22 6" stroke={b} strokeWidth="1.4" fill="none" /><path d="M3 14c-2-3 10-10 19-8" stroke={b} fill="none" /></ViewBtn>
            <div className="h-[8px]" />
            <ViewBtn><path d="M2 7h15v15H2zM2 7l5-5h15v15l-5 5M17 7l5-5" stroke={g} fill="none" /><text x="9.5" y="18" fontSize="8" fontWeight="700" fill={b} textAnchor="middle" fontFamily="Liberation Sans, sans-serif">3D</text></ViewBtn>
            <div className="h-[5px]" />
            <ViewBtn><path d="M2 7h15v15H2zM17 7l5-5v15l-5 5" stroke={g} fill="none" /><path d="M2 7l5-5h15l-5 5z" fill="#cfe0f6" stroke={b} /></ViewBtn>
            <div className="h-[4px]" />
            <Caret c="#555" />
            <div className="h-[6px]" />
            <ViewBtn><path d="M2 7h15v15H2z" fill="#cfe0f6" stroke={b} /><path d="M2 7l5-5h15v15l-5 5M17 7l5-5" stroke={b} fill="none" /></ViewBtn>
            <div className="h-[4px]" />
            <Caret c="#555" />
            <div className="h-[5px]" />
            <ViewBtn><path d="M18 6a9.5 9.5 0 1 1-6-2" stroke={g} fill="none" /><path d="M11 0l6 4-6 4z" fill={b} /></ViewBtn>
            <div className="h-[5px]" />
            <Caret c="#555" />
            <div className="w-[23px] h-[1px] bg-[#777] mt-[5px] mb-[4px]" />
            <ViewBtn><path d="M2 2h19v14M2 2v20h12M5 7h2M9 7h9M5 12h2M9 12h7M5 17h2" stroke={g} fill="none" /><path d="M14 18c3-3 7-3 9 0-2 3-6 3-9 0z" stroke={b} fill="none" /><circle cx="18.5" cy="18" r="1.5" fill={b} /></ViewBtn>
          </div>
        </div>

        {/* splitter */}
        <div className="w-[4px] shrink-0 flex flex-col bg-white">
          <div className="h-[280px]" />
          <div className="h-[100px] bg-[#6a6f78]" />
        </div>

        {/* sheets */}
        <div className="relative w-[318px] shrink-0 flex flex-col bg-white border-x border-b border-[#dedede] h-[656px]">
          <PanelHead t="图纸管理" />
          <div className="h-[27px] shrink-0 flex items-center pl-[5px] pt-[1px] border-y border-[#e6e6e6] whitespace-nowrap">
            <Ic n="add" />
            <span className="ml-[5px]">添加</span>
            <span className="ml-[7px]"><Ic n="locate" /></span>
            <span className="ml-[4px]">定位</span>
            <span className="ml-[6px] flex"><Caret /></span>
            <span className="ml-[6px]"><Ic n="split2" /></span>
            <span className="ml-[4px]">手动分割</span>
            <span className="ml-[6px] flex"><Caret /></span>
            <span className="ml-[7px]"><Ic n="copyD" /></span>
            <span className="ml-[5px] text-[#b0b0b0]">复制</span>
            <span className="ml-[53px] text-[#555] text-[9px]">▸▸</span>
          </div>
          <div className="h-[25px] shrink-0 flex items-center justify-between pl-[2px] pr-[6px] pt-[3px] text-[#aaa] border-b border-[#e6e6e6]">
            <span>搜索图纸...</span>
            <Ic n="search" s={13} />
          </div>
          <div className="h-[3px] shrink-0" />
          <div className="flex-1 flex min-h-0">
            <div className="w-[302px] shrink-0 overflow-hidden whitespace-nowrap">
              <div className="h-[21px] flex border-y border-[#dddddd]">
                <span className="w-[22px] border-r border-[#dddddd]" />
                <span className="w-[111px] bg-[#7eb8f7] text-white flex items-center justify-center">图纸名称</span>
                <span className="w-[51px] border-r border-[#dddddd] flex items-center justify-center">比例</span>
                <span className="w-[71px] border-r border-[#dddddd] flex items-center justify-center">楼层</span>
                <span className="w-[47px] flex items-center justify-center">分层</span>
              </div>
              {sheetRows.map((r) => {
                const sel = r.n === 4;
                return (
                  <div key={r.n} className={`h-[21px] flex border-b border-[#dddddd] ${sel ? "bg-[#d3e6fb]" : ""}`}>
                    <span className={`w-[22px] border-r border-[#dddddd] flex items-center justify-center shrink-0 text-[13px] ${sel ? "bg-[#7eb8f7] text-white font-bold" : ""}`}>{r.n}</span>
                    <span className={`w-[111px] flex items-center shrink-0 ${sel ? "border-2 border-[#808080]" : "border-r border-[#dddddd]"}`}>
                      {r.parent ? (
                        <>
                          <span className="ml-[2px] w-[13px] h-[13px] border border-[#999] rounded-[2px] flex items-center justify-center shrink-0"><span className="w-[7px] h-[1px] bg-[#666]" /></span>
                          <span className="ml-[6px] tracking-[0.6px]">{r.name}</span>
                        </>
                      ) : (
                        <>
                          <svg width="26" height="21" viewBox="0 0 26 21" className="ml-[2px] shrink-0"><path d="M7 0V10H24" stroke="#cfcfcf" fill="none" /></svg>
                          <span className="ml-[4px]">{r.name}</span>
                        </>
                      )}
                    </span>
                    <span className="w-[51px] border-r border-[#dddddd] flex items-center justify-center shrink-0">{r.parent ? "" : "1:1"}</span>
                    <span className="w-[71px] border-r border-[#dddddd] flex items-center justify-center shrink-0">{r.floor}</span>
                    <span className="w-[47px] flex items-center pl-[3px] shrink-0">{r.layer}</span>
                  </div>
                );
              })}
            </div>
            <div className="flex-1 pl-[2px] pt-[14px]"><div className="w-[8px] h-[400px] rounded-full bg-[#c9c9c9]" /></div>
          </div>
          <HScroll l="ml-[4px]" w="w-[203px]" ax="ml-[6px]" bx="ml-[72px]" />

          <div className="absolute left-[45px] top-[602px] text-[#8a8a8a]/70 pointer-events-none whitespace-nowrap">
            <div className="text-[21px] leading-[24px]">激活 Windows</div>
            <div className="text-[14.5px] leading-[20px] mt-[3px]">转到“设置”以激活 Windows。</div>
          </div>
        </div>
      </div>

      {/* status */}
      <div className="h-[30px] flex items-center shrink-0 bg-[#fbfbfb] whitespace-nowrap">
        <span className="ml-[2px] w-[263px] text-[12.7px]">X = 32888.45 Y = 203689.33</span>
        <span className="w-[113px]">层高：3</span>
        <span className="w-[133px]">底标高：0</span>
        <span className="w-[103px]">0</span>
        <span className="w-[103px]">隐藏：0</span>
        <StatBtn w="w-[25px]" on><path d="M4 2v11h9" stroke={b} fill="none" /><path d="M4 9h3v4" stroke={b} fill="none" /></StatBtn>
        <div className="ml-[3px]"><StatBtn w="w-[36px]" on caret><rect x="3" y="3" width="10" height="11" rx="2" stroke={g} fill="none" /><circle cx="3" cy="3" r="1.4" stroke={b} fill="#fff" /></StatBtn></div>
        <div className="ml-[3px]"><StatBtn w="w-[35px]" caret><path d="M8 1l6 3v8l-6 3-6-3V4zM2 4l6 3 6-3M8 7v8" stroke={g} fill="none" /></StatBtn></div>
        <div className="ml-[4px]"><StatBtn w="w-[24px]"><path d="M3 1l10 14M13 1L3 15" stroke="#9a9a9a" fill="none" /></StatBtn></div>
        <div className="ml-[4px]"><StatBtn w="w-[35px]" caret><path d="M2 13L10 3M2 13h11M7 8c1.5 1 2 3 2 5" stroke="#999" fill="none" /><path d="M2 14h11" stroke="#999" strokeWidth="2" /></StatBtn></div>
        <div className="ml-[4px]"><StatBtn w="w-[35px]" on caret><path d="M1 5h6M4 2v6" stroke={b} strokeWidth="1.2" fill="none" /><rect x="6" y="10" width="9" height="4" fill={b} /></StatBtn></div>
        <div className="ml-[4px]"><StatBtn w="w-[24px]"><path d="M2 1h10v11H2z" stroke={g} fill="#888" /><path d="M5 14h7M10 8l4 3-4 3z" fill={g} stroke={g} /></StatBtn></div>
        <div className="ml-[4px]"><StatBtn w="w-[24px]"><path d="M3 14C3 8 7 3 13 2" stroke="#888" fill="none" /><path d="M10 8l4 4-4 2z" fill={g} /></StatBtn></div>
        <span className="ml-[6px] w-[74px]">CAD图亮度：</span>
        <span>100%</span>
        <div className="ml-[8px] w-[24px] h-[25px] rounded-[3px] border border-[#c8c8c8] bg-white flex items-center justify-center shrink-0">
          <svg width="14" height="14" viewBox="0 0 14 14"><circle cx="7" cy="7" r="6" stroke={g} fill="none" /><path d="M4 7h6" stroke={b} /></svg>
        </div>
        <div className="w-[45px] flex items-center shrink-0 h-[25px]">
          <span className="w-[37px] h-[2px] bg-[#c8c8c8]" />
          <span className="w-[8px] h-[18px] rounded-[3px] border border-[#888] bg-white" />
        </div>
        <div className="w-[24px] h-[25px] rounded-[3px] border border-[#c8c8c8] bg-white flex items-center justify-center shrink-0">
          <svg width="14" height="14" viewBox="0 0 14 14"><circle cx="7" cy="7" r="6" stroke={g} fill="none" /><path d="M4 7h6M7 4v6" stroke={b} /></svg>
        </div>
        <span className="ml-[1px]">指定下一点</span>
      </div>

      {/* taskbar */}
      <div className="flex-1 flex bg-[#2e2c1f] overflow-hidden relative">
        <span className="ml-[144px] w-[144px] bg-[#e8e8e8] mt-[4px]" />
        <span className="w-[56px] bg-[#2080f0] mt-[4px]" />
        <span className="ml-[152px] w-[49px] bg-[#6e6a58] mt-[1px]" />
        <span className="w-[48px] bg-[#55503f] mt-[1px]" />
        <span className="ml-[641px] text-white text-[10px] leading-[10px] mt-[6px]">98%</span>
        <span className="ml-[237px] text-white text-[10px] leading-[10px] mt-[6px]">17:03</span>
      </div>

      {/* system audio meter */}
      <div className="absolute left-[1590px] top-[793px] w-[10px] h-[60px] rounded-[3px] bg-[#353535] border border-[#777] flex flex-col justify-end items-center gap-[1px] pb-[2px] overflow-hidden">
        {[0, 1, 2, 3, 4, 5, 6, 7, 8].map((k) => <span key={k} className="w-[6px] h-[2px] bg-[#56c85a] shrink-0" />)}
      </div>
    </div>
  );
}
